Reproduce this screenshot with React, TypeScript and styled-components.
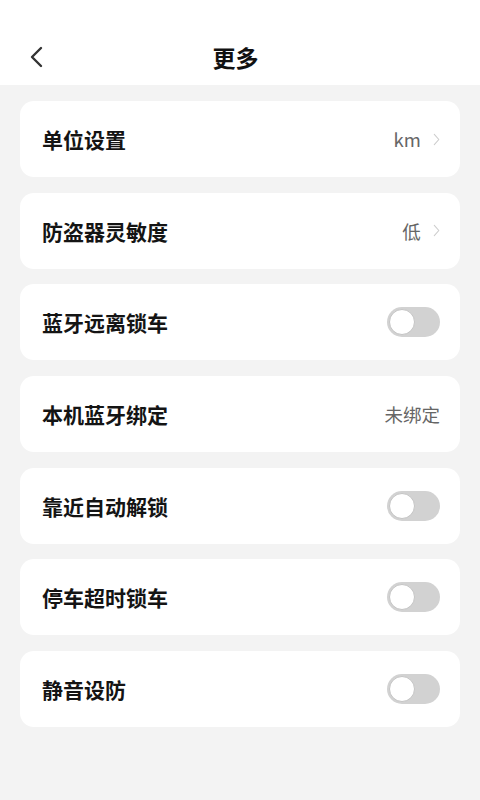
import styled, { createGlobalStyle } from 'styled-components'

const GlobalStyle = createGlobalStyle`
  html, body {
    margin: 0;
    padding: 0;
    background: #f3f3f3;
    font-family: "Noto Sans CJK SC", "Noto Sans", sans-serif;
  }
`

type Row = {
  label: string
  value?: string
  arrow?: boolean
  toggle?: boolean
}

const rows: Row[] = [
  { label: '单位设置', value: 'km', arrow: true },
  { label: '防盗器灵敏度', value: '低', arrow: true },
  { label: '蓝牙远离锁车', toggle: true },
  { label: '本机蓝牙绑定', value: '未绑定' },
  { label: '靠近自动解锁', toggle: true },
  { label: '停车超时锁车', toggle: true },
  { label: '静音设防', toggle: true },
]

const Chevron = ({ size, color, width }: { size: number; color: string; width: number }) => (
  <svg width={size * 0.55} height={size} viewBox="0 0 11 20" fill="none">
    <path d="M2 2 L9 10 L2 18" stroke={color} strokeWidth={width} strokeLinecap="round" strokeLinejoin="round" />
  </svg>
)

const BackChevron = () => (
  <svg width="16" height="22" viewBox="0 0 16 22" fill="none">
    <path d="M13 2 L4 11 L13 20" stroke="#333" strokeWidth="2.4" strokeLinecap="round" strokeLinejoin="round" />
  </svg>
)

const App = () => (
  <Page>
    <GlobalStyle />
    <Header>
      <BackButton>
        <BackChevron />
      </BackButton>
      <Title>更多</Title>
    </Header>
    <List>
      {rows.map((row) => (
        <Card key={row.label}>
          <Label>{row.label}</Label>
          <Right>
            {row.value && <Value>{row.value}</Value>}
            {row.arrow && <Chevron size={13} color="#cccccc" width={1.6} />}
            {row.toggle && (
              <Switch>
                <Knob />
              </Switch>
            )}
          </Right>
        </Card>
      ))}
    </List>
  </Page>
)

const Page = styled.div`
  min-height: 800px;
  background: #f3f3f3;
`

const Header = styled.header`
  position: relative;
  height: 85px;
  background: #ffffff;
  display: flex;
  align-items: center;
  justify-content: center;
  padding-top: 28px;
  padding-right: 9px;
  box-sizing: border-box;
`

const BackButton = styled.div`
  position: absolute;
  left: 28px;
  top: 46px;
  display: flex;
`

const Title = styled.h1`
  margin: 0;
  font-size: 23px;
  font-weight: 700;
  color: #111111;
`

const List = styled.div`
  display: flex;
  flex-direction: column;
  gap: 15.7px;
  padding: 16px 20px;
`

const Card = styled.div`
  height: 76px;
  background: #ffffff;
  border-radius: 14px;
  display: flex;
  align-items: center;
  justify-content: space-between;
  padding: 0 20px 0 22px;
  box-sizing: border-box;
`

const Label = styled.span`
  font-size: 21px;
  font-weight: 700;
  color: #141414;
`

const Right = styled.div`
  display: flex;
  align-items: center;
  gap: 12px;
`

const Value = styled.span`
  font-size: 18.5px;
  color: #666666;
`

const Switch = styled.div`
  width: 53px;
  height: 30px;
  border-radius: 15px;
  background: #d2d2d2;
  display: flex;
  align-items: center;
  padding: 2px;
  box-sizing: border-box;
`

const Knob = styled.div`
  width: 26px;
  height: 26px;
  border-radius: 50%;
  background: #ffffff;
  box-sizing: border-box;
  border: 1px solid #c4c4c4;
`

export default App
